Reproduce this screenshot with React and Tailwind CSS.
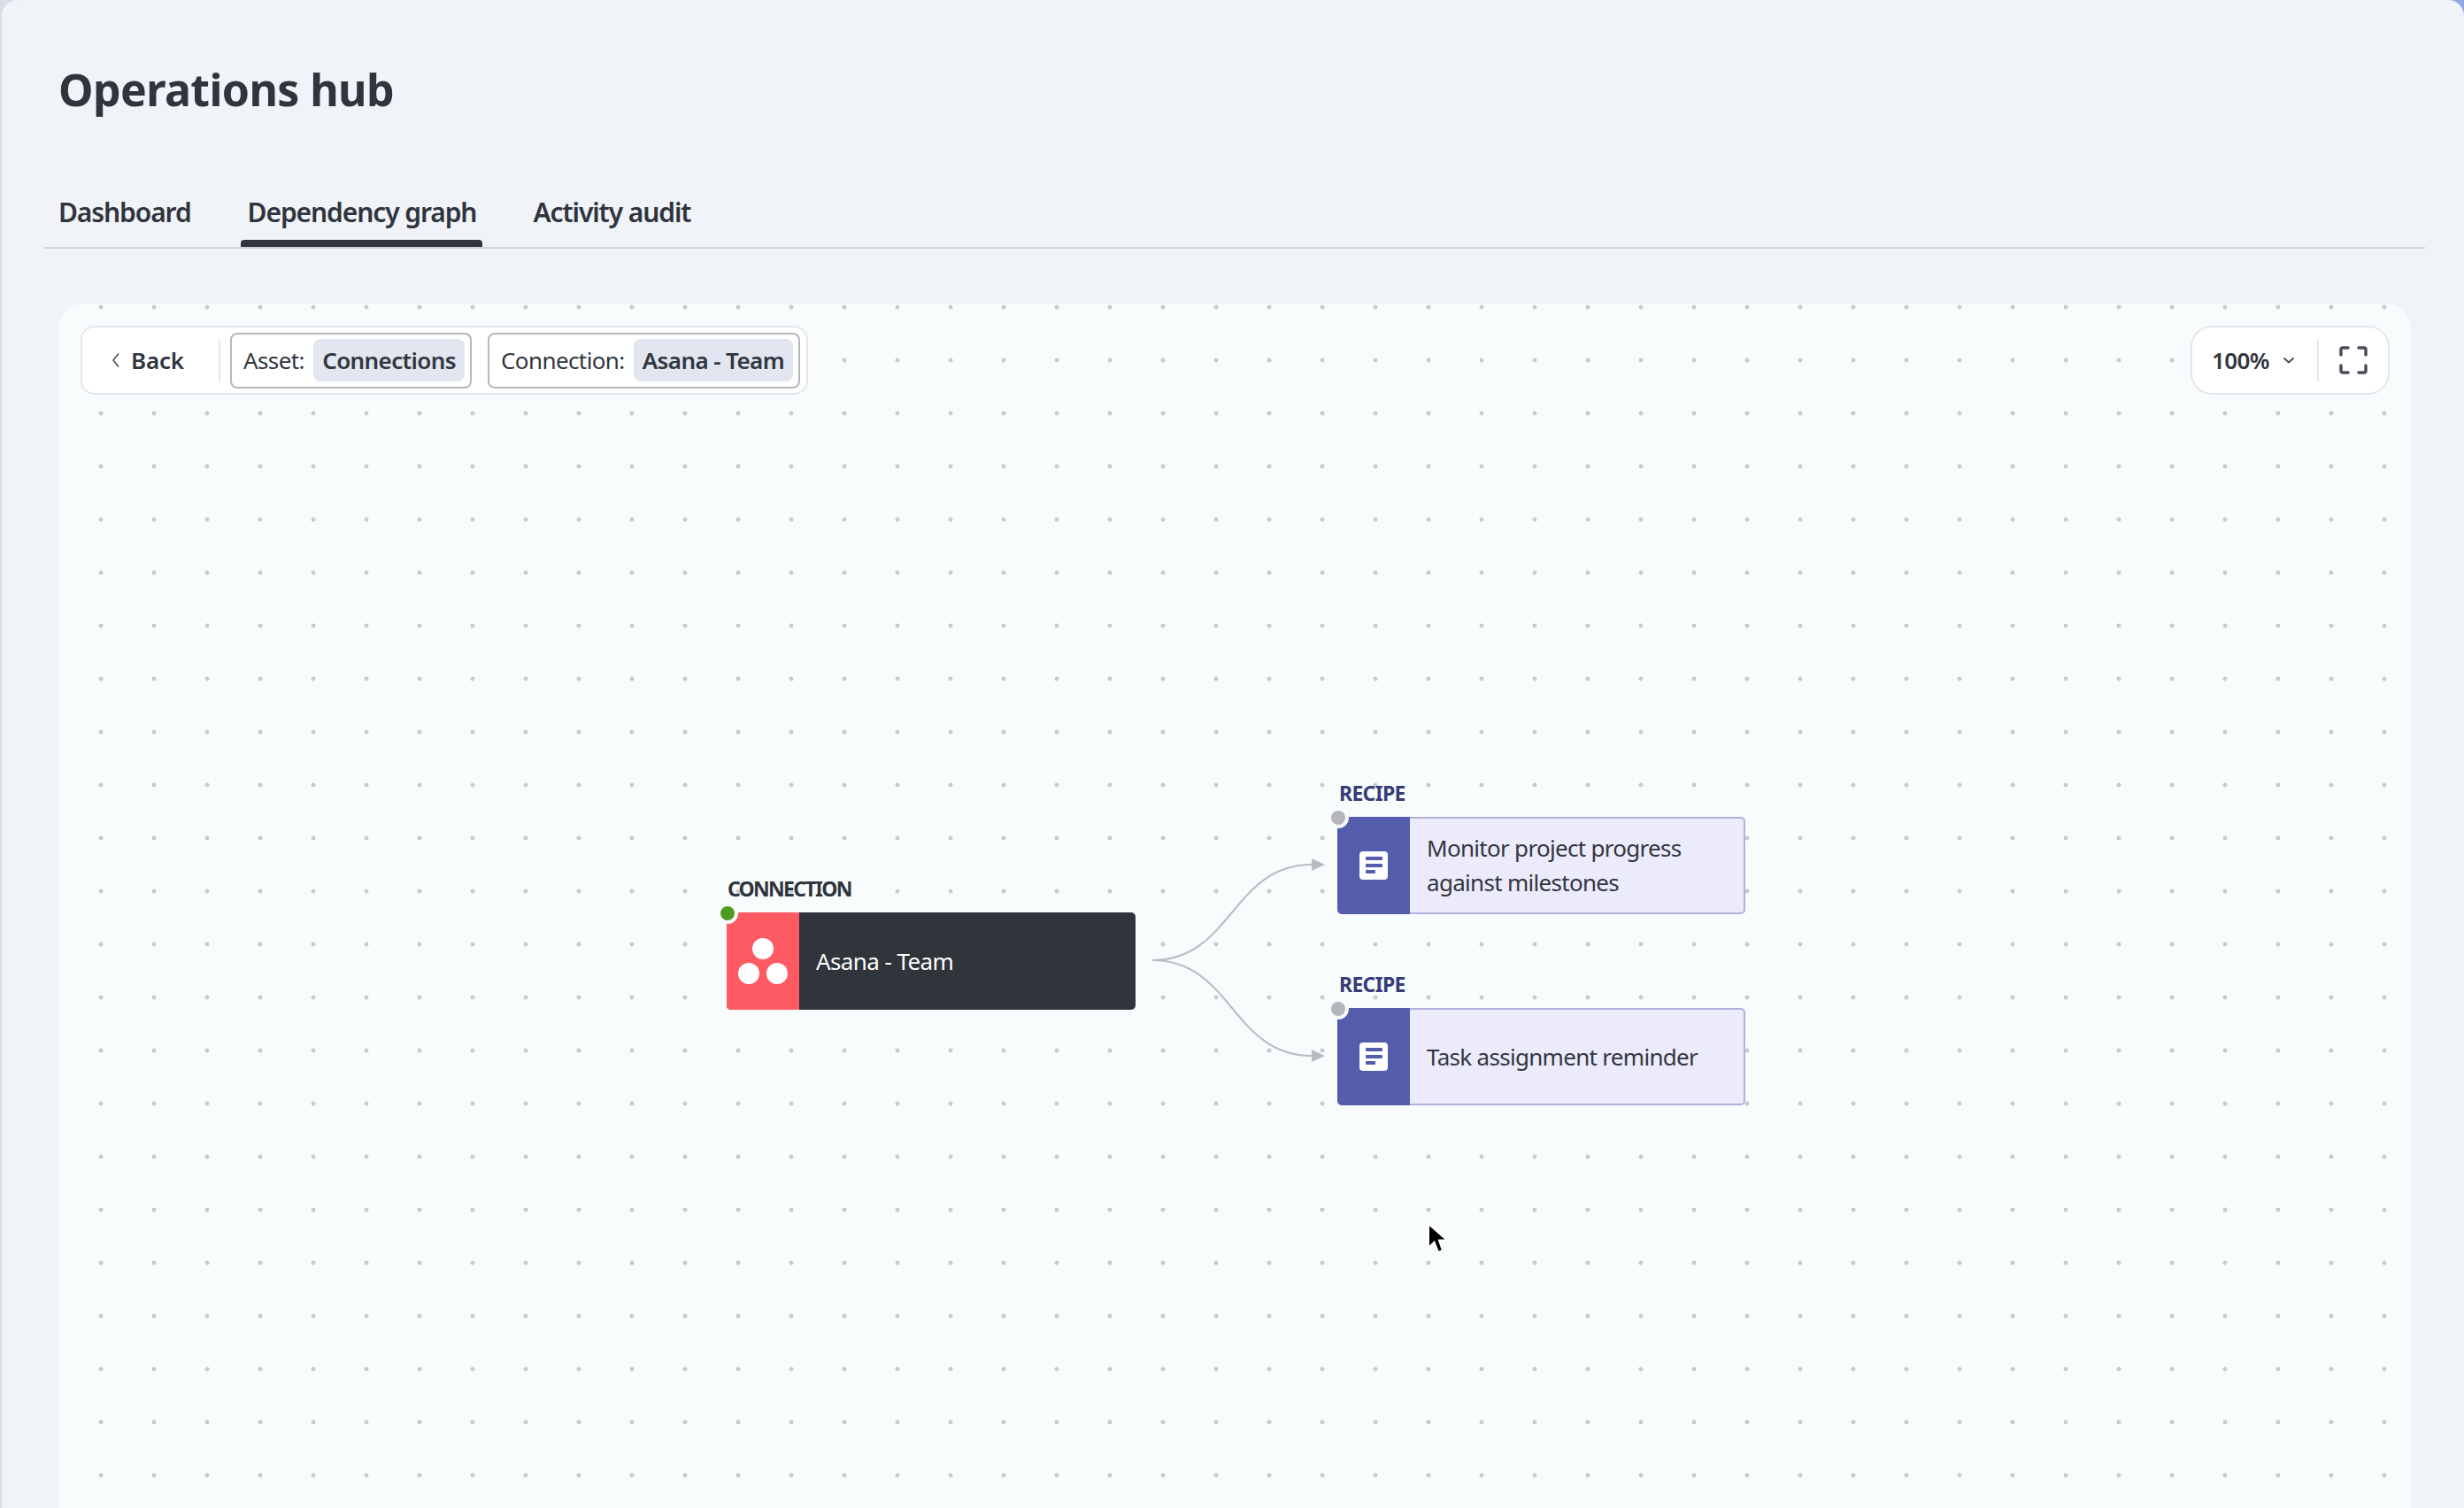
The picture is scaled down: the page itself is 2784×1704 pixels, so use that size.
import React from 'react';

const font = "font-['Noto_Sans',sans-serif]";

const RecipeIcon = () => (
  <svg width="32" height="32" viewBox="0 0 32 32">
    <rect width="32" height="32" rx="4" fill="#ffffff" />
    <rect x="7" y="6" width="19" height="4" rx="1" fill="#535dab" />
    <rect x="7" y="14" width="19" height="4" rx="1" fill="#535dab" />
    <rect x="7" y="21" width="11" height="4" rx="1" fill="#535dab" />
  </svg>
);

const AsanaIcon = () => (
  <svg width="56" height="52" viewBox="0 0 56 52">
    <circle cx="28" cy="12" r="12" fill="#ffffff" />
    <circle cx="12" cy="40" r="12" fill="#ffffff" />
    <circle cx="44" cy="40" r="12" fill="#ffffff" />
  </svg>
);

const Chip = ({ label, value, className }) => (
  <div className={`flex h-[63px] items-center justify-between rounded-[8px] border-2 border-[#b6b6be] pl-[13px] pr-[6px] ${className}`}>
    <span className="text-[26px] tracking-[-0.6px] text-[#32363f]">{label}</span>
    <span className="flex h-[48px] items-center rounded-[8px] bg-[#e2e6f0] px-[10px] text-[26px] font-semibold tracking-[-0.6px] text-[#32363f]">
      {value}
    </span>
  </div>
);

const RecipeNode = ({ className, children }) => (
  <div className={`absolute left-[1445px] w-[461px] ${className}`}>
    <div className="mb-[12px] ml-[2px] text-[23px] leading-[30px] font-bold tracking-[-0.7px] text-[#353d78]">RECIPE</div>
    <div className="relative flex h-[110px] rounded-[5px]">
      <div className="flex w-[82px] items-center justify-center rounded-l-[5px] bg-[#535dab]">
        <RecipeIcon />
      </div>
      <div className="flex flex-1 items-center rounded-r-[5px] border-2 border-l-0 border-[#b2b0dc] bg-[#ecebfb] pl-[19px] text-[26px] leading-[39px] tracking-[-0.7px] text-[#32363f]">
        {children}
      </div>
      <span className="absolute -top-[11px] -left-[11px] h-[24px] w-[24px] rounded-full border-[4px] border-[#f9fcfd] bg-[#b4b6ba]" />
    </div>
  </div>
);

export default function App() {
  return (
    <div className={`h-[1704px] w-[2784px] overflow-hidden bg-[linear-gradient(to_right,#dadde6_90%,#93a5e0)] ${font}`}>
      <div className="ml-[2px] h-full rounded-t-[18px] bg-[#f0f3f8]">
        <div className="px-[64px] pt-[71px]">
          <h1 className="text-[50px] leading-[60px] font-bold tracking-[-0.6px] text-[#2f343d]">Operations hub</h1>
        </div>

        {/* Tabs */}
        <div className="mx-[48px] mt-[68px] flex h-[82px] w-[2690px] items-start gap-[64px] border-b-2 border-[#cfd3dc] pl-[16px]">
          <div className="pt-[21px] text-[30px] leading-[40px] font-semibold tracking-[-1.1px] text-[#2f343d]">Dashboard</div>
          <div className="relative pt-[21px] text-[30px] leading-[40px] font-semibold tracking-[-1.1px] text-[#2f343d]">
            Dependency graph
            <span className="absolute -right-[7px] -bottom-[19px] -left-[8px] h-[8px] rounded-t-[4px] bg-[#2f343d]" />
          </div>
          <div className="pt-[21px] text-[30px] leading-[40px] font-semibold tracking-[-1.1px] text-[#2f343d]">Activity audit</div>
        </div>

        {/* Canvas */}
        <div className="relative mt-[62px] ml-[64px] h-[1400px] w-[2658px] rounded-t-[28px] bg-[#f9fcfd] bg-[radial-gradient(circle,#c9cbce_2.3px,transparent_2.7px)] bg-[size:60px_60px] bg-[position:18px_34px]">
          <div className="absolute top-[25px] left-[25px] flex h-[78px] w-[822px] items-center rounded-[16px] border-2 border-[#e6e7ee] bg-white">
            <div className="flex w-[154px] items-center pl-[30px]">
              <svg className="shrink-0" width="14" height="18" viewBox="0 0 14 18" fill="none" stroke="#4a4e57" strokeWidth="1.6">
                <path d="M11 1.5L5 9l6 7.5" />
              </svg>
              <span className="ml-[11px] text-[26px] font-semibold tracking-[-0.2px] text-[#32363f]">Back</span>
            </div>
            <span className="h-[47px] w-[2px] bg-[#e6e7ee]" />
            <Chip label="Asset:" value="Connections" className="ml-[11px] w-[273px]" />
            <Chip label="Connection:" value="Asana - Team" className="ml-[18px] w-[353px]" />
          </div>

          <div className="absolute top-[25px] right-[24px] flex h-[78px] w-[225px] items-center rounded-[24px] border-2 border-[#e6e7ee] bg-white">
            <span className="ml-[22px] w-[70px] text-[26px] font-semibold tracking-[-0.6px] text-[#32363f]">100%</span>
            <svg className="ml-[10px]" width="14" height="10" viewBox="0 0 14 10" fill="none" stroke="#4a4e57" strokeWidth="2">
              <path d="M1.5 2.5L7 7.5l5.5-5" />
            </svg>
            <span className="ml-[25px] h-[47px] w-[2px] bg-[#e6e7ee]" />
            <svg className="ml-[23px]" width="32" height="32" viewBox="0 0 32 32" fill="none" stroke="#4a4e57" strokeWidth="3.5" strokeLinecap="round">
              <path d="M2 10V4a2 2 0 0 1 2-2h6M22 2h6a2 2 0 0 1 2 2v6M30 22v6a2 2 0 0 1-2 2h-6M10 30H4a2 2 0 0 1-2-2v-6" />
            </svg>
          </div>

          {/* Edges */}
          <svg className="absolute top-0 left-0" width="2658" height="1400" fill="none">
            <path d="M1236 742C1326 742 1326 634 1416 634" stroke="#b9bbc0" strokeWidth="2" />
            <path d="M1236 742C1326 742 1326 850 1416 850" stroke="#b9bbc0" strokeWidth="2" />
            <path d="M1416 627L1431 634L1416 641Z" fill="#b9bbc0" />
            <path d="M1416 843L1431 850L1416 857Z" fill="#b9bbc0" />
          </svg>

          {/* Connection node */}
          <div className="absolute top-[646px] left-[755px] w-[462px]">
            <div className="mb-[12px] ml-[1px] text-[23px] leading-[30px] font-bold tracking-[-1.7px] text-[#2f343d]">CONNECTION</div>
            <div className="relative flex h-[110px] rounded-[5px] bg-[#30343b]">
              <div className="flex w-[82px] items-center justify-center rounded-l-[5px] bg-[#fd5a63]">
                <AsanaIcon />
              </div>
              <div className="flex flex-1 items-center pl-[19px] text-[26px] tracking-[-0.6px] text-white">Asana - Team</div>
              <span className="absolute -top-[11px] -left-[11px] h-[24px] w-[24px] rounded-full border-[4px] border-[#f9fcfd] bg-[#4f9a22]" />
            </div>
          </div>

          <RecipeNode className="top-[538px]">
            <span>Monitor project progress<br />against milestones</span>
          </RecipeNode>
          <RecipeNode className="top-[754px]">Task assignment reminder</RecipeNode>

          {/* Mouse pointer */}
          <svg className="absolute top-[1038px] left-[1545px]" width="26" height="38" viewBox="0 0 26 38">
            <path d="M3 2V29L9.5 22.5L14 34L19 32L15 20.5H24Z" fill="#000000" stroke="#ffffff" strokeWidth="2" />
          </svg>
        </div>
      </div>
    </div>
  );
}
